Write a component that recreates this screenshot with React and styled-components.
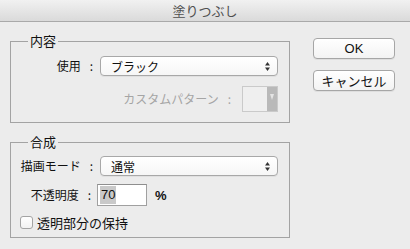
import styled, { createGlobalStyle } from 'styled-components'

const GlobalStyle = createGlobalStyle`
	html, body {
		margin: 0;
		padding: 0;
		background: #ececec;
	}

	body {
		font-family: "Noto Sans CJK JP", "Noto Sans", sans-serif;
		font-size: 12px;
		color: #1a1a1a;
		width: 410px;
		height: 249px;
		overflow: hidden;
	}
`

const Window = styled.div`
	width: 410px;
	height: 249px;
	background: #ececec;
`

const TitleBar = styled.div`
	height: 21px;
	border-bottom: 1px solid #a9a9a9;
	background: linear-gradient(#f1f1f1, #dadada);
	display: flex;
	align-items: center;
	justify-content: center;
	color: #4f4f4f;
	font-size: 13px;
	line-height: 21px;
`

const Main = styled.div`
	display: flex;
	padding-left: 10px;
	gap: 23px;
`

const LeftColumn = styled.div`
	width: 280px;
	padding-top: 12px;
	display: flex;
	flex-direction: column;
	gap: 12px;
`

const RightColumn = styled.div`
	padding-top: 16px;
	display: flex;
	flex-direction: column;
	gap: 11px;
`

const Group = styled.fieldset`
	margin: 0;
	padding: 0;
	min-width: 0;
	border: 1px solid #a3a3a3;
`

const Legend = styled.legend`
	margin-left: 17px;
	padding: 0 2px;
	font-size: 13px;
	line-height: 14px;
	color: #111;
`

const Body = styled.div`
	display: flex;
	flex-direction: column;
	padding: ${({$padding}) => $padding};
`

const Row = styled.div`
	display: flex;
	align-items: center;
	margin-top: ${({$top}) => $top || 0}px;
	height: ${({$height}) => $height}px;
`

const Label = styled.div`
	width: ${({$width}) => $width}px;
	margin-right: ${({$gap}) => $gap}px;
	text-align: right;
	white-space: nowrap;
	color: ${({$disabled}) => $disabled ? '#a5a5a5' : '#111'};
	line-height: 14px;
`

const Colon = styled.span`
	margin-left: 9px;
	margin-right: 2px;
`

const Select = styled.div`
	width: 178px;
	height: 20px;
	box-sizing: border-box;
	border: 1px solid #a8a8a8;
	border-radius: 4px;
	background: linear-gradient(#ffffff, #f6f6f6);
	box-shadow: 0 1px 0 rgba(0, 0, 0, 0.05);
	display: flex;
	align-items: center;
	justify-content: space-between;
	padding: 0 6px 0 10px;
	font-size: 12px;
	color: #111;
`

const Arrows = styled.svg`
	width: 7px;
	height: 11px;
`

const PatternBox = styled.div`
	width: 36px;
	height: 26px;
	box-sizing: border-box;
	border: 1px solid #cacaca;
	background: #efefef;
	display: flex;
	justify-content: flex-end;
`

const PatternArrow = styled.div`
	width: 10px;
	background: #b9b9b9;
	display: flex;
	justify-content: center;
	padding-top: 7px;
	box-sizing: border-box;
`

const NumberInput = styled.div`
	width: 50px;
	height: 22px;
	box-sizing: border-box;
	border: 1px solid #a0a0a0;
	border-top-color: #8e8e8e;
	background: #fff;
	display: flex;
	align-items: center;
	padding-left: 2px;
	font-family: "Liberation Sans", Arial, sans-serif;
	font-size: 13px;
`

const Selected = styled.span`
	background: #c9c9c9;
	padding: 1px 1px;
	line-height: 16px;
	color: #111;
`

const Unit = styled.span`
	margin-left: 8px;
	font-family: "Liberation Sans", Arial, sans-serif;
	font-size: 13px;
	font-weight: 600;
	color: #111;
`

const Checkbox = styled.div`
	width: 13px;
	height: 13px;
	box-sizing: border-box;
	border: 1px solid #a4a4a4;
	border-radius: 3px;
	background: linear-gradient(#ffffff, #f2f2f2);
	margin-left: 9px;
	margin-right: 4px;
`

const CheckLabel = styled.span`
	font-size: 13px;
	color: #111;
`

const Button = styled.div`
	width: 82px;
	height: 21px;
	box-sizing: border-box;
	border: 1px solid #a6a6a6;
	border-radius: 4px;
	background: linear-gradient(#ffffff, #f3f3f3);
	box-shadow: 0 1px 0 rgba(0, 0, 0, 0.06);
	display: flex;
	align-items: center;
	justify-content: center;
	font-size: 13px;
	color: #111;
	font-family: ${({$latin}) => $latin ? '"Liberation Sans", Arial, sans-serif' : '"Noto Sans CJK JP", sans-serif'};
`

const SelectArrows = () => (
	<Arrows viewBox='0 0 7 11'>
		<path d='M3.5 1 L6 4.5 L1 4.5 Z' fill='#333' />
		<path d='M3.5 10 L6 6.5 L1 6.5 Z' fill='#333' />
	</Arrows>
)

const App = () => (
	<Window>
		<GlobalStyle />
		<TitleBar>塗りつぶし</TitleBar>
		<Main>
			<LeftColumn>
				<Group>
					<Legend>内容</Legend>
					<Body $padding='8px 10px 10px 0'>
						<Row $height={20}>
							<Label $width={84} $gap={5}>使用<Colon>:</Colon></Label>
							<Select>
								<span>ブラック</span>
								<SelectArrows />
							</Select>
						</Row>
						<Row $height={26} $top={10}>
							<Label $width={222} $gap={9} $disabled>カスタムパターン<Colon>:</Colon></Label>
							<PatternBox>
								<PatternArrow>
									<svg width='4' height='6' viewBox='0 0 4 6'>
										<path d='M0 0 L4 0 L2 6 Z' fill='#e4e4e4' />
									</svg>
								</PatternArrow>
							</PatternBox>
						</Row>
					</Body>
				</Group>
				<Group>
					<Legend>合成</Legend>
					<Body $padding='7px 10px 8px 0'>
						<Row $height={20}>
							<Label $width={84} $gap={5}>描画モード<Colon>:</Colon></Label>
							<Select>
								<span>通常</span>
								<SelectArrows />
							</Select>
						</Row>
						<Row $height={22} $top={8}>
							<Label $width={82} $gap={4}>不透明度<Colon>:</Colon></Label>
							<NumberInput>
								<Selected>70</Selected>
							</NumberInput>
							<Unit>%</Unit>
						</Row>
						<Row $height={14} $top={9}>
							<Checkbox />
							<CheckLabel>透明部分の保持</CheckLabel>
						</Row>
					</Body>
				</Group>
			</LeftColumn>
			<RightColumn>
				<Button $latin>OK</Button>
				<Button>キャンセル</Button>
			</RightColumn>
		</Main>
	</Window>
)

export default App
